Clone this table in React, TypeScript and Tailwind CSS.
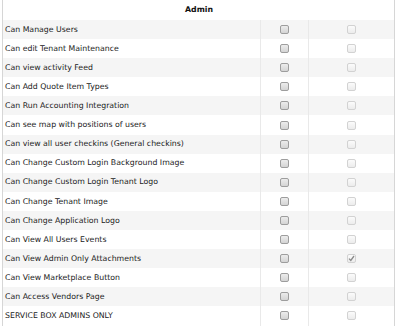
import React from "react";

const rows: { label: string; checked?: boolean }[] = [
  { label: "Can Manage Users" },
  { label: "Can edit Tenant Maintenance" },
  { label: "Can view activity Feed" },
  { label: "Can Add Quote Item Types" },
  { label: "Can Run Accounting Integration" },
  { label: "Can see map with positions of users" },
  { label: "Can view all user checkins (General checkins)" },
  { label: "Can Change Custom Login Background Image" },
  { label: "Can Change Custom Login Tenant Logo" },
  { label: "Can Change Tenant Image" },
  { label: "Can Change Application Logo" },
  { label: "Can View All Users Events" },
  { label: "Can View Admin Only Attachments", checked: true },
  { label: "Can View Marketplace Button" },
  { label: "Can Access Vendors Page" },
  { label: "SERVICE BOX ADMINS ONLY" },
];

function Box({ disabled, checked }: { disabled?: boolean; checked?: boolean }) {
  return (
    <div
      className={
        disabled
          ? "w-[9px] h-[9px] rounded-[2px] border border-[#d2d2d2] bg-gradient-to-b from-[#fbfbfb] to-[#ececec] flex items-center justify-center"
          : "w-[9px] h-[9px] rounded-[2px] border border-[#9d9d9d] bg-gradient-to-b from-[#ececec] to-[#d4d4d4] flex items-center justify-center"
      }
    >
      {checked && (
        <svg width="7" height="7" viewBox="0 0 7 7">
          <path d="M1 3.6 L2.8 5.4 L6 1" fill="none" stroke="#8a8a8a" strokeWidth="1.3" />
        </svg>
      )}
    </div>
  );
}

export default function App() {
  return (
    <div className="w-[396px] h-[330px] bg-white" style={{ fontFamily: '"DejaVu Sans", Verdana, sans-serif' }}>
      <div className="ml-[2px] w-[393px] border-l border-r border-[#d6d6d6]">
        <div className="h-[20px] flex items-center justify-center text-[7.8px] font-bold text-[#111] pl-[1px]">
          Admin
        </div>
        {rows.map((r, i) => (
          <div
            key={i}
            className={
              "h-[19.1px] grid grid-cols-[258px_48px_1fr] items-stretch text-[7.8px] text-[#222] " +
              (i % 2 === 0 ? "bg-[#f5f5f5]" : "bg-white")
            }
          >
            <div className="flex items-center pl-[2px] border-r border-[#e9e9e9]">{r.label}</div>
            <div className="flex items-center justify-center border-r border-[#e9e9e9]">
              <Box />
            </div>
            <div className="flex items-center justify-center">
              <Box disabled checked={r.checked} />
            </div>
          </div>
        ))}
      </div>
    </div>
  );
}
